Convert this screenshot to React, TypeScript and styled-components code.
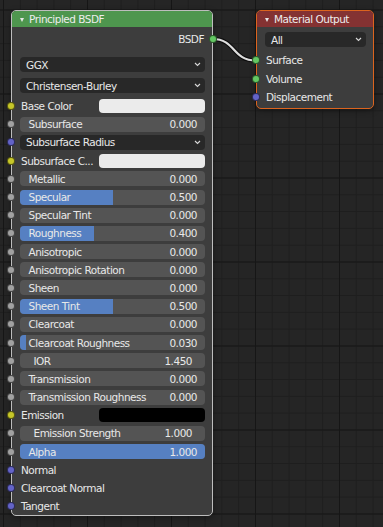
import React from "react";
import styled, { createGlobalStyle } from "styled-components";

const GlobalStyle = createGlobalStyle`
  html, body { margin: 0; padding: 0; background: #242424; }
  body { font-family: "DejaVu Sans", "Liberation Sans", sans-serif; }
  * { box-sizing: border-box; }
`;

const COLORS = {
  color: "#c7c729",
  float: "#a1a1a1",
  vector: "#6363c7",
  shader: "#63c763",
};

const Canvas = styled.div`
  position: relative;
  width: 383px;
  height: 527px;
  overflow: hidden;
  background-color: #252525;
  background-image:
    linear-gradient(#161616 1px, transparent 1px),
    linear-gradient(90deg, #161616 1px, transparent 1px),
    linear-gradient(#1e1e1e 1px, transparent 1px),
    linear-gradient(90deg, #1e1e1e 1px, transparent 1px);
  background-size: 84px 84px, 84px 84px, 16.8px 16.8px, 16.8px 16.8px;
  background-position: 0 9.5px, 3px 0, 0 9.5px, 3px 0;
`;

const Link = styled.svg`
  position: absolute;
  left: 0;
  top: 0;
  pointer-events: none;
`;

const Node = styled.div<{ $left: number; $top: number; $width: number; $border: string }>`
  position: absolute;
  left: ${(p) => p.$left}px;
  top: ${(p) => p.$top}px;
  width: ${(p) => p.$width}px;
  background: #3d3d3d;
  border: 1px solid ${(p) => p.$border};
  border-radius: 5px;
  box-shadow: 0 2px 6px rgba(0, 0, 0, 0.35);
`;

const NodeHeader = styled.div<{ $color: string }>`
  height: 16px;
  display: flex;
  align-items: center;
  gap: 5px;
  padding-left: 8px;
  background: ${(p) => p.$color};
  border-radius: 4px 4px 0 0;
  color: #ededed;
  font-size: 10.5px;
  letter-spacing: -0.5px;
`;

const Collapse = styled.span`
  width: 0;
  height: 0;
  border-left: 2.5px solid transparent;
  border-right: 2.5px solid transparent;
  border-top: 4px solid #e6e6e6;
  margin-top: 1px;
`;

const Body = styled.div<{ $pt: number; $pb: number }>`
  display: flex;
  flex-direction: column;
  padding: ${(p) => p.$pt}px 0 ${(p) => p.$pb}px;
`;

const Row = styled.div<{ $h?: number; $end?: boolean }>`
  position: relative;
  height: ${(p) => p.$h ?? 18.2}px;
  display: flex;
  align-items: center;
  justify-content: ${(p) => (p.$end ? "flex-end" : "flex-start")};
  padding: 0 7px 0 8px;
  color: #e8e8e8;
  font-size: 10.5px;
  letter-spacing: -0.5px;
  white-space: nowrap;
`;

const Socket = styled.span<{ $color: string; $right?: boolean }>`
  position: absolute;
  top: 50%;
  ${(p) => (p.$right ? "right: -5px;" : "left: -5px;")}
  width: 8px;
  height: 8px;
  margin-top: -4px;
  border-radius: 50%;
  background: ${(p) => p.$color};
  border: 1px solid rgba(0, 0, 0, 0.55);
  z-index: 2;
`;

const Label = styled.span`
  flex: 1;
  padding-left: 1px;
  overflow: hidden;
`;

const OutLabel = styled.span`
  padding-right: 1px;
`;

const Dropdown = styled.div<{ $mt: number; $fill?: boolean }>`
  height: 15px;
  margin: ${(p) => (p.$fill ? "0" : `${p.$mt}px 7px 0 8px`)};
  flex: ${(p) => (p.$fill ? 1 : "none")};
  display: flex;
  align-items: center;
  justify-content: space-between;
  padding: 0 4px 0 6px;
  background: #282828;
  border-radius: 4px;
  color: #e8e8e8;
  font-size: 10.5px;
  letter-spacing: -0.5px;
`;

const Slider = styled.div<{ $inset: number }>`
  position: relative;
  flex: 1;
  height: 15px;
  display: flex;
  align-items: center;
  justify-content: space-between;
  padding: 0 ${(p) => p.$inset}px 0 ${(p) => p.$inset + 0.5}px;
  background: #545454;
  border-radius: 4px;
  overflow: hidden;
`;

const Fill = styled.span`
  position: absolute;
  left: 0;
  top: 0;
  bottom: 0;
  background: #5680c2;
`;

const SliderText = styled.span`
  position: relative;
  z-index: 1;
`;

const ColorField = styled.span<{ $color: string }>`
  width: 106px;
  height: 14px;
  border-radius: 4px;
  background: ${(p) => p.$color};
`;

const Spacer = styled.div<{ $h: number }>`
  height: ${(p) => p.$h}px;
`;

const Chevron = () => (
  <svg width="7" height="5" viewBox="0 0 7 5">
    <polyline points="1,1 3.5,3.5 6,1" fill="none" stroke="#d8d8d8" strokeWidth="1.1" />
  </svg>
);

type Input =
  | { kind: "slider"; name: string; value: number; socket: string; fill?: boolean; inset?: number }
  | { kind: "color"; name: string; color: string; socket: string }
  | { kind: "menu"; name: string; socket: string }
  | { kind: "label"; name: string; socket: string };

const inputs: Input[] = [
  { kind: "color", name: "Base Color", color: "#ebebeb", socket: COLORS.color },
  { kind: "slider", name: "Subsurface", value: 0, socket: COLORS.float },
  { kind: "menu", name: "Subsurface Radius", socket: COLORS.vector },
  { kind: "color", name: "Subsurface C...", color: "#ebebeb", socket: COLORS.color },
  { kind: "slider", name: "Metallic", value: 0, socket: COLORS.float },
  { kind: "slider", name: "Specular", value: 0.5, socket: COLORS.float },
  { kind: "slider", name: "Specular Tint", value: 0, socket: COLORS.float },
  { kind: "slider", name: "Roughness", value: 0.4, socket: COLORS.float },
  { kind: "slider", name: "Anisotropic", value: 0, socket: COLORS.float },
  { kind: "slider", name: "Anisotropic Rotation", value: 0, socket: COLORS.float },
  { kind: "slider", name: "Sheen", value: 0, socket: COLORS.float },
  { kind: "slider", name: "Sheen Tint", value: 0.5, socket: COLORS.float },
  { kind: "slider", name: "Clearcoat", value: 0, socket: COLORS.float },
  { kind: "slider", name: "Clearcoat Roughness", value: 0.03, socket: COLORS.float },
  { kind: "slider", name: "IOR", value: 1.45, socket: COLORS.float, fill: false, inset: 13 },
  { kind: "slider", name: "Transmission", value: 0, socket: COLORS.float },
  { kind: "slider", name: "Transmission Roughness", value: 0, socket: COLORS.float },
  { kind: "color", name: "Emission", color: "#000000", socket: COLORS.color },
  { kind: "slider", name: "Emission Strength", value: 1, socket: COLORS.float, fill: false, inset: 13 },
  { kind: "slider", name: "Alpha", value: 1, socket: COLORS.float },
  { kind: "label", name: "Normal", socket: COLORS.vector },
  { kind: "label", name: "Clearcoat Normal", socket: COLORS.vector },
  { kind: "label", name: "Tangent", socket: COLORS.vector },
];

const InputRow = ({ input }: { input: Input }) => {
  let content: React.ReactNode = null;
  if (input.kind === "slider") {
    const hasFill = input.fill !== false;
    content = (
      <Slider $inset={input.inset ?? 8}>
        {hasFill && input.value > 0 && <Fill style={{ width: `${Math.max(input.value * 100, 1.8)}%` }} />}
        <SliderText>{input.name}</SliderText>
        <SliderText>{input.value.toFixed(3)}</SliderText>
      </Slider>
    );
  } else if (input.kind === "color") {
    content = (
      <>
        <Label>{input.name}</Label>
        <ColorField $color={input.color} />
      </>
    );
  } else if (input.kind === "menu") {
    content = (
      <Dropdown $mt={0} $fill>
        <span>{input.name}</span>
        <Chevron />
      </Dropdown>
    );
  } else {
    content = <Label>{input.name}</Label>;
  }
  return (
    <Row>
      <Socket $color={input.socket} />
      {content}
    </Row>
  );
};

export default function App() {
  return (
    <>
      <GlobalStyle />
      <Canvas>
        <Link width="383" height="527" viewBox="0 0 383 527">
          <path d="M212.5 39 C236 39, 232 60.5, 256 60.5" fill="none" stroke="rgba(0,0,0,0.6)" strokeWidth="4.5" />
          <path d="M212.5 39 C236 39, 232 60.5, 256 60.5" fill="none" stroke="#dedede" strokeWidth="2.2" />
        </Link>

        <Node $left={11} $top={10} $width={202} $border="#bdbdbd">
          <NodeHeader $color="#4e964e">
            <Collapse />
            <span>Principled BSDF</span>
          </NodeHeader>
          <Body $pt={3} $pb={0}>
            <Row $h={18} $end>
              <OutLabel>BSDF</OutLabel>
              <Socket $color={COLORS.shader} $right />
            </Row>
            <Dropdown $mt={9}>
              <span>GGX</span>
              <Chevron />
            </Dropdown>
            <Dropdown $mt={6}>
              <span>Christensen-Burley</span>
              <Chevron />
            </Dropdown>
            <Spacer $h={4} />
            {inputs.map((input) => (
              <InputRow key={input.name} input={input} />
            ))}
          </Body>
        </Node>

        <Node $left={256} $top={10} $width={118} $border="#dc641e">
          <NodeHeader $color="#843232">
            <Collapse />
            <span>Material Output</span>
          </NodeHeader>
          <Body $pt={5} $pb={1}>
            <Dropdown $mt={0}>
              <span>All</span>
              <Chevron />
            </Dropdown>
            <Spacer $h={4} />
            <Row $h={18.5}>
              <Socket $color={COLORS.shader} />
              <Label>Surface</Label>
            </Row>
            <Row $h={18.5}>
              <Socket $color={COLORS.shader} />
              <Label>Volume</Label>
            </Row>
            <Row $h={18.5}>
              <Socket $color={COLORS.vector} />
              <Label>Displacement</Label>
            </Row>
          </Body>
        </Node>
      </Canvas>
    </>
  );
}
